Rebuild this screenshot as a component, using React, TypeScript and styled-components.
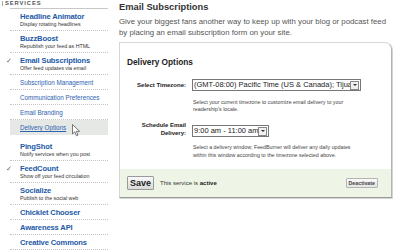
import React from 'react'
import styled, { createGlobalStyle } from 'styled-components'

const GlobalStyle = createGlobalStyle`
  html, body { margin: 0; padding: 0; background: #fff; }
  body {
    width: 400px;
    height: 250px;
    overflow: hidden;
    font-family: "Liberation Sans", Arial, sans-serif;
    color: #333;
  }
`

const Page = styled.div`
  display: flex;
  width: 400px;
  height: 250px;
`

const Sidebar = styled.div`
  width: 108px;
  flex-shrink: 0;
`

const SideHeader = styled.div`
  height: 8px;
  display: flex;
  align-items: flex-start;
  gap: 2px;
  padding-left: 2px;
  font-size: 5.8px;
  line-height: 7px;
  font-weight: bold;
  letter-spacing: 0.9px;
  color: #555;
  &::before {
    content: '';
    width: 1px;
    height: 5px;
    margin-top: 1px;
    background: #aaa;
  }
`

const HeaderRule = styled.div`
  height: 1px;
  margin-left: 10px;
  background: #c8c8c8;
`

const List = styled.div`
  margin-left: 10px;
`

const Item = styled.div<{ $gap?: boolean; $single?: boolean }>`
  padding: ${p => (p.$single ? '3px 0 2px 10px' : '3px 0 3px 10px')};
  margin-top: ${p => (p.$gap ? '4px' : '0')};
  border-bottom: 1px dotted #c4c4c4;
`

const Title = styled.div`
  font-size: 7.6px;
  line-height: 9px;
  height: 9px;
  font-weight: bold;
  letter-spacing: -0.15px;
  color: #1d5aa6;
`

const Check = styled.span`
  display: inline-block;
  width: 14px;
  margin-left: -14px;
  color: #666;
  font-weight: normal;
  font-size: 7px;
  line-height: 9px;
  font-family: "DejaVu Sans", sans-serif;
`

const Sub = styled.div`
  font-size: 5.3px;
  line-height: 6px;
  height: 6px;
  color: #333;
`

const SubItem = styled.div<{ $active?: boolean }>`
  position: relative;
  height: 7px;
  padding: 4px 0 3px 10px;
  font-size: 6.3px;
  line-height: 7px;
  color: #2d62b0;
  background: ${p => (p.$active ? '#e6e8e6' : 'transparent')};
  text-decoration: ${p => (p.$active ? 'underline' : 'none')};
  border-bottom: 1px dotted ${p => (p.$active ? 'transparent' : '#c4c4c4')};
`

const Pointer = styled.svg`
  position: absolute;
  left: 62px;
  top: 4px;
`

const Main = styled.div`
  flex: 1;
  padding: 1px 8px 0 11px;
`

const Heading = styled.h1`
  margin: 0;
  font-size: 9.3px;
  line-height: 12px;
  font-weight: bold;
  color: #333;
`

const Intro = styled.p`
  margin: 3px 0 0;
  font-size: 7.8px;
  line-height: 11px;
  color: #555;
`

const Box = styled.div`
  margin-top: 4px;
  border: 1px solid #d6d6d6;
  border-right-color: #b4b4b4;
  border-bottom-color: #9a9a9a;
  border-top-right-radius: 7px;
  box-shadow: 1px 1px 0 #d4d4d4;
`

const BoxBody = styled.div`
  padding: 14px 0 10px 7px;
`

const BoxTitle = styled.h2`
  margin: 0 0 12px;
  font-size: 8.3px;
  line-height: 10px;
  font-weight: bold;
  color: #222;
`

const FormRow = styled.div<{ $top?: number }>`
  display: grid;
  grid-template-columns: 59px 1fr;
  column-gap: 6px;
  align-items: end;
  margin-top: ${p => p.$top ?? 0}px;
`

const Label = styled.div<{ $lh?: number }>`
  text-align: right;
  font-size: 6px;
  line-height: ${p => p.$lh ?? 12}px;
  font-weight: bold;
  color: #222;
`

const SelectBox = styled.div<{ $w: number }>`
  display: flex;
  align-items: center;
  width: ${p => p.$w}px;
  height: 12px;
  box-sizing: border-box;
  border: 1px solid #777;
  background: #fff;
  font-size: 7.5px;
  color: #222;
  overflow: hidden;
  white-space: nowrap;
`

const SelectText = styled.span`
  flex: 1;
  overflow: hidden;
  padding-left: 1px;
  line-height: 10px;
`

const Arrow = styled.span`
  width: 9px;
  height: 9px;
  margin-right: 1px;
  box-sizing: border-box;
  border: 1px solid #888;
  background: #f0f0f0;
  display: flex;
  align-items: center;
  justify-content: center;
  &::after {
    content: '';
    border-left: 2px solid transparent;
    border-right: 2px solid transparent;
    border-top: 2px solid #333;
  }
`

const Help = styled.div<{ $top: number; $lh: number }>`
  grid-column: 2;
  margin-top: ${p => p.$top}px;
  padding-left: 1px;
  font-size: 5.3px;
  line-height: ${p => p.$lh}px;
  color: #444;
`

const Footer = styled.div`
  display: flex;
  align-items: center;
  height: 28px;
  padding: 0 13px 0 7px;
  background: #eef5e6;
`

const SaveButton = styled.button`
  height: 14px;
  padding: 0 2px;
  border: 1px solid #9a9a9a;
  border-radius: 1px;
  background: linear-gradient(#fafafa, #d9d9d9);
  font-family: "Liberation Sans", Arial, sans-serif;
  font-size: 9px;
  font-weight: bold;
  line-height: 12px;
  color: #222;
`

const Status = styled.span`
  margin-left: 6px;
  flex: 1;
  font-size: 6px;
  color: #333;
  b { color: #222; }
`

const SmallButton = styled.button`
  height: 10px;
  padding: 0 2px;
  border: 1px solid #b4b4b4;
  border-radius: 1px;
  background: linear-gradient(#fbfbfb, #e4e4e4);
  font-family: "Liberation Sans", Arial, sans-serif;
  font-size: 5.3px;
  font-weight: bold;
  color: #444;
`

type Svc = { title: string; sub?: string; checked?: boolean; gap?: boolean }

const topServices: Svc[] = [
  { title: 'Headline Animator', sub: 'Display rotating headlines' },
  { title: 'BuzzBoost', sub: 'Republish your feed as HTML' },
  { title: 'Email Subscriptions', sub: 'Offer feed updates via email', checked: true },
]

const subPages = ['Subscription Management', 'Communication Preferences', 'Email Branding', 'Delivery Options']

const moreServices: Svc[] = [
  { title: 'PingShot', sub: 'Notify services when you post', gap: true },
  { title: 'FeedCount', sub: 'Show off your feed circulation', checked: true },
  { title: 'Socialize', sub: 'Publish to the social web' },
  { title: 'Chicklet Chooser' },
  { title: 'Awareness API' },
  { title: 'Creative Commons' },
]

function ServiceItem({ s }: { s: Svc }) {
  return (
    <Item $gap={s.gap} $single={!s.sub}>
      <Title>
        {s.checked && <Check>✓</Check>}
        {s.title}
      </Title>
      {s.sub && <Sub>{s.sub}</Sub>}
    </Item>
  )
}

export default function App() {
  return (
    <Page>
      <GlobalStyle />
      <Sidebar>
        <SideHeader>SERVICES</SideHeader>
        <HeaderRule />
        <List>
          {topServices.map(s => <ServiceItem key={s.title} s={s} />)}
          {subPages.map(p => (
            <SubItem key={p} $active={p === 'Delivery Options'}>
              {p}
              {p === 'Delivery Options' && (
                <Pointer width="9" height="13" viewBox="0 0 9 13">
                  <path d="M0.5 0.5 L0.5 10 L2.8 7.8 L4.5 11.8 L6 11.1 L4.4 7.3 L7.6 7.3 Z" fill="#fff" stroke="#555" strokeWidth="0.8" />
                </Pointer>
              )}
            </SubItem>
          ))}
          {moreServices.map(s => <ServiceItem key={s.title} s={s} />)}
        </List>
      </Sidebar>

      <Main>
        <Heading>Email Subscriptions</Heading>
        <Intro>
          Give your biggest fans another way to keep up with your blog or podcast feed by placing an email
          subscription form on your site.
        </Intro>
        <Box>
          <BoxBody>
            <BoxTitle>Delivery Options</BoxTitle>
            <FormRow>
              <Label>Select Timezone:</Label>
              <SelectBox $w={169}>
                <SelectText>(GMT-08:00) Pacific Time (US &amp; Canada); Tijuana</SelectText>
                <Arrow />
              </SelectBox>
              <Help $top={8} $lh={7}>
                Select your current timezone to customize email delivery to your
                <br />
                readership's locale.
              </Help>
            </FormRow>
            <FormRow $top={8}>
              <Label $lh={8}>
                Schedule Email
                <br />
                Delivery:
              </Label>
              <SelectBox $w={77}>
                <SelectText>9:00 am - 11:00 am</SelectText>
                <Arrow />
              </SelectBox>
              <Help $top={6} $lh={8}>
                Select a delivery window; FeedBurner will deliver any daily updates
                <br />
                within this window according to the timezone selected above.
              </Help>
            </FormRow>
          </BoxBody>
          <Footer>
            <SaveButton>Save</SaveButton>
            <Status>
              This service is <b>active</b>
            </Status>
            <SmallButton>Deactivate</SmallButton>
          </Footer>
        </Box>
      </Main>
    </Page>
  )
}
